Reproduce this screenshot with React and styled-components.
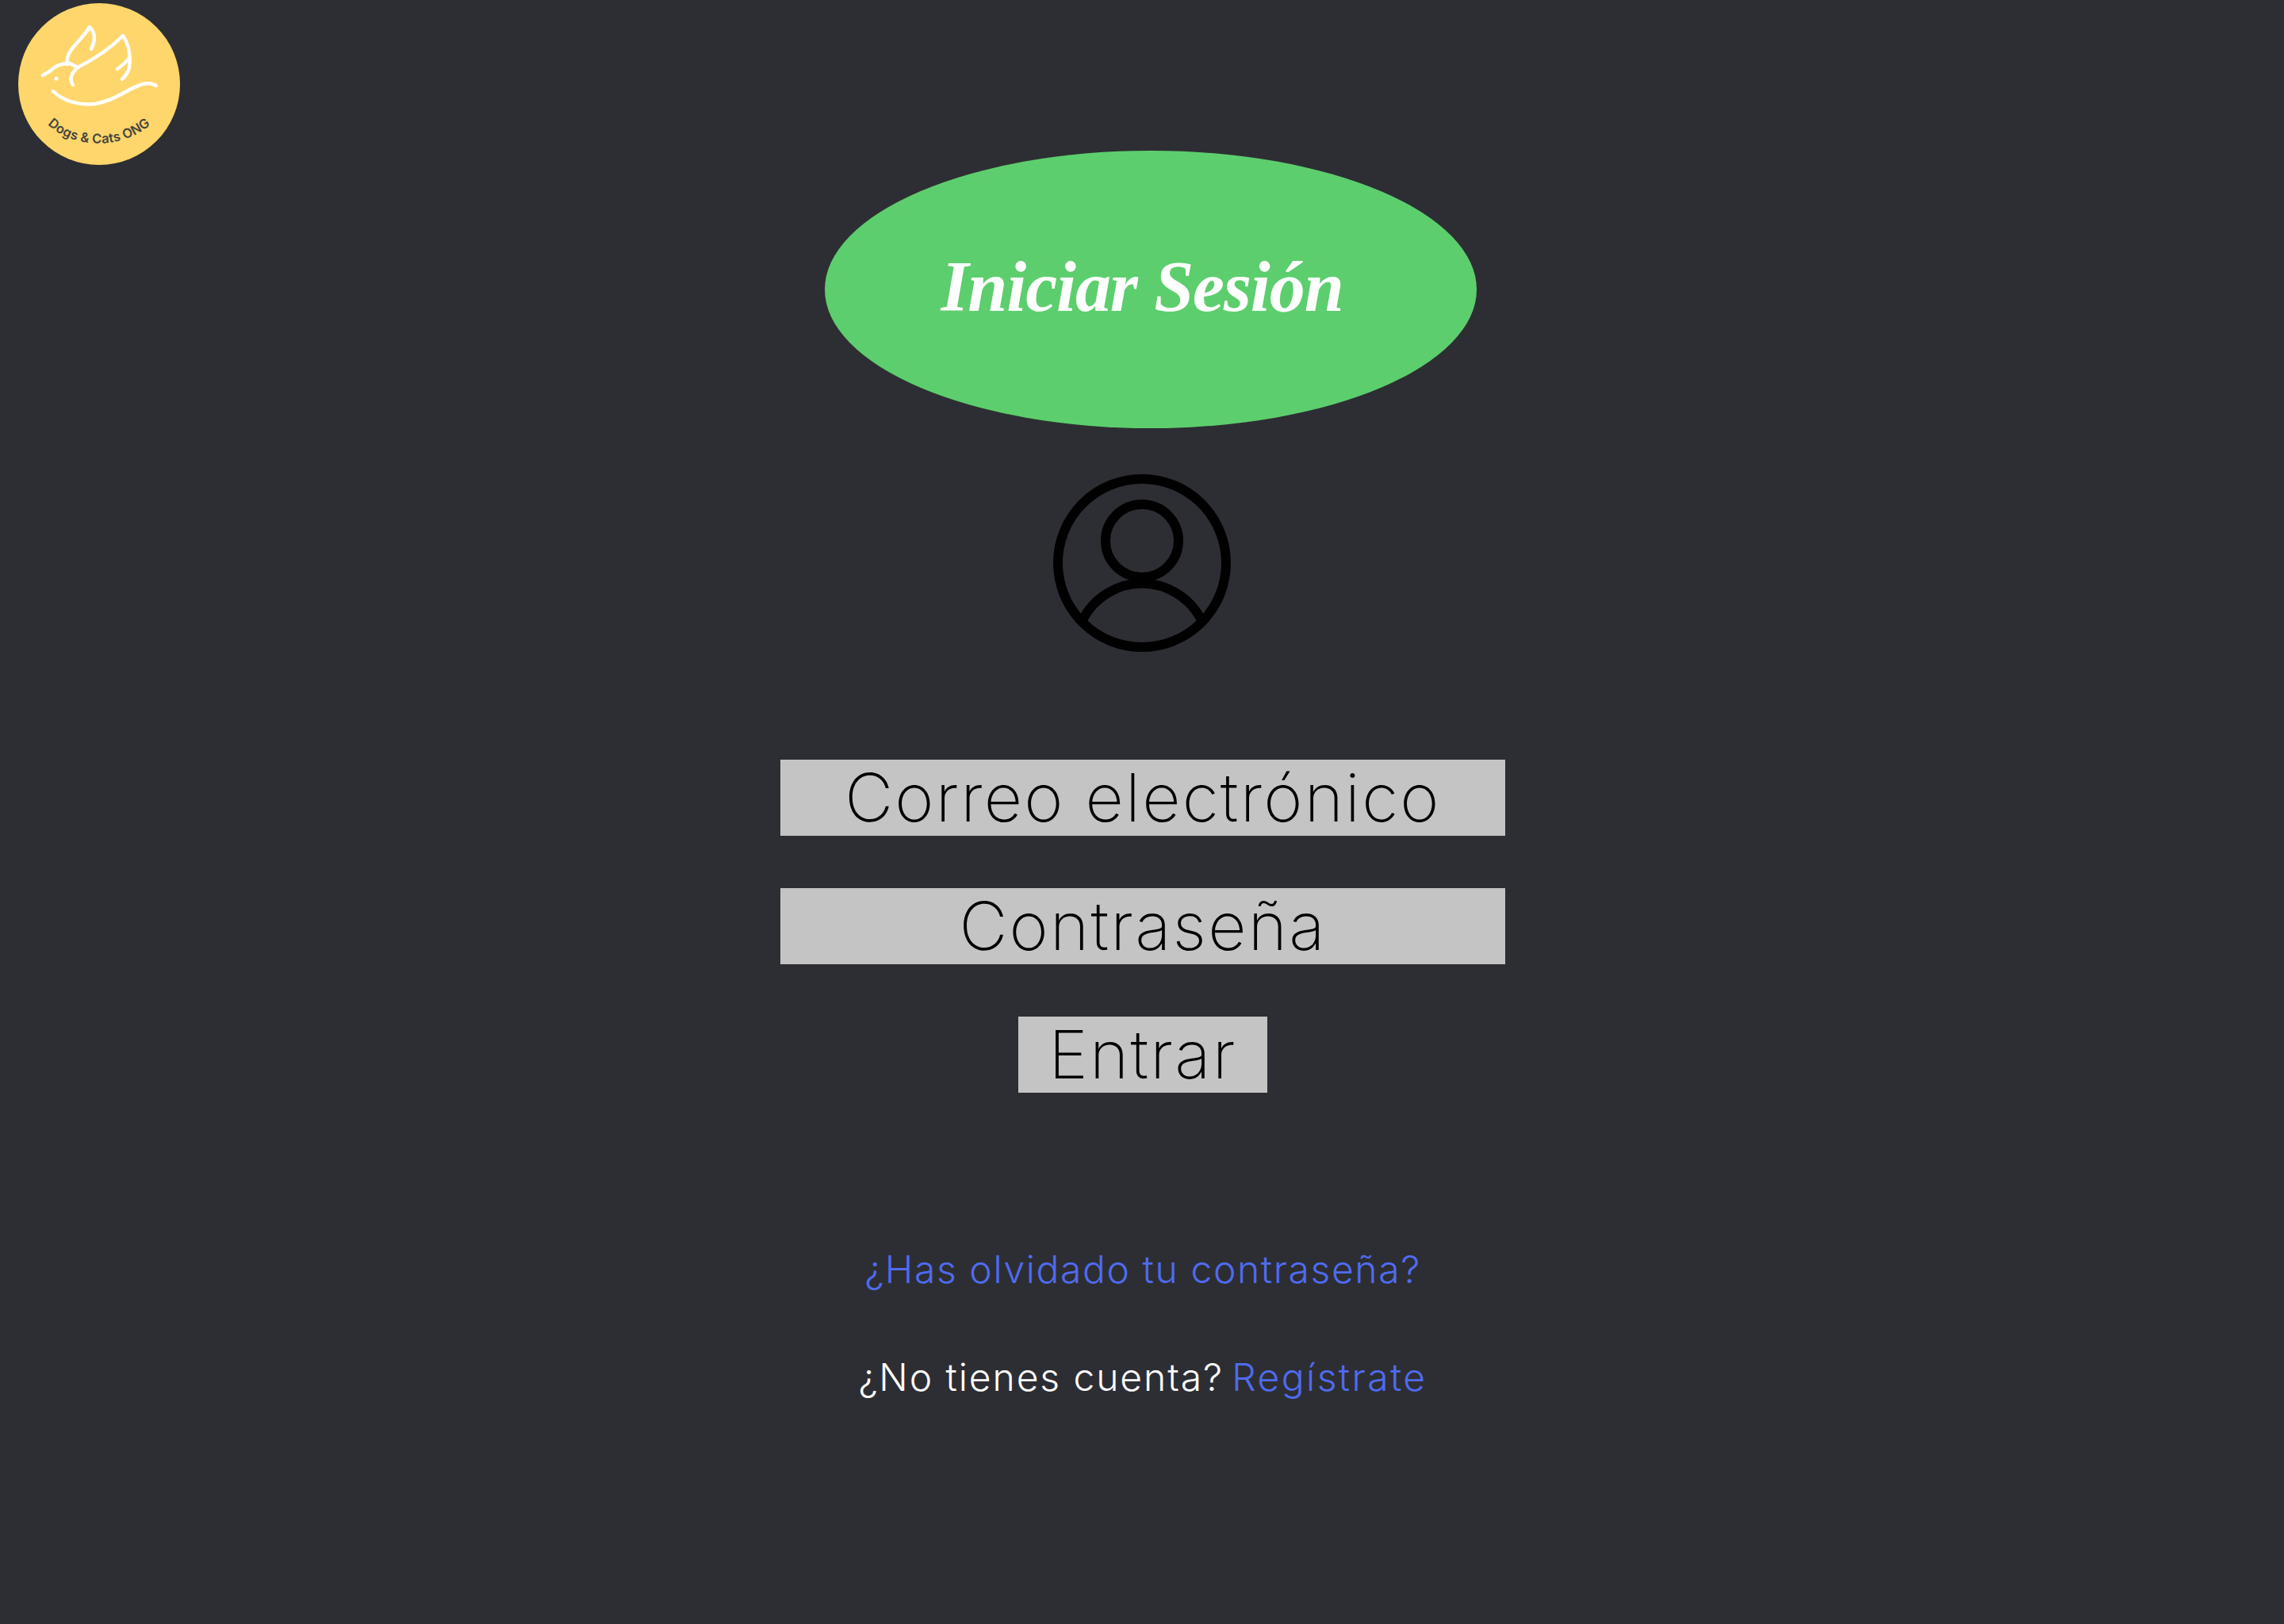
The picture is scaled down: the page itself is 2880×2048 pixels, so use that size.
import React from 'react'
import styled, { createGlobalStyle } from 'styled-components'

const GlobalStyle = createGlobalStyle`
  html, body {
    margin: 0;
    padding: 0;
    background: #2d2e33;
  }
`

const Page = styled.div`
  width: 2880px;
  height: 2048px;
  background: #2d2e33;
  font-family: 'Inter', 'Liberation Sans', sans-serif;
  overflow: hidden;
`

const Header = styled.header`
  height: 190px;
`

const Logo = styled.svg`
  display: block;
  width: 260px;
  height: 220px;
`

const Main = styled.main`
  display: flex;
  flex-direction: column;
  align-items: center;
  padding-left: 2px;
`

const TitleBadge = styled.div`
  width: 822px;
  height: 350px;
  margin-left: 20px;
  padding-right: 22px;
  padding-bottom: 6px;
  box-sizing: border-box;
  border-radius: 50%;
  background: #5dce6d;
  display: flex;
  align-items: center;
  justify-content: center;
`

const Title = styled.h1`
  margin: 0;
  font-family: 'Liberation Serif', serif;
  font-style: italic;
  font-weight: 700;
  font-size: 90px;
  letter-spacing: -1.1px;
  line-height: 1;
  color: #fff;
`

const UserIcon = styled.svg`
  display: block;
  width: 224px;
  height: 224px;
  margin-top: 58px;
  margin-right: 2px;
  margin-bottom: 136px;
`

const Form = styled.form`
  display: flex;
  flex-direction: column;
  align-items: center;
  gap: 66px;
`

const Field = styled.div`
  width: ${p => p.$width}px;
  height: 96px;
  background: #c4c4c4;
  color: #000;
  font-size: 84px;
  font-weight: 150;
  letter-spacing: 2.2px;
  line-height: 96px;
  text-align: center;
  white-space: nowrap;
`

const Links = styled.div`
  margin-top: 193px;
  display: flex;
  flex-direction: column;
  align-items: center;
  gap: 76px;
  font-size: 48px;
  font-weight: 300;
  letter-spacing: 1.6px;
  line-height: 60px;
  white-space: nowrap;
`

const Line = styled.div`
  color: #fff;
  letter-spacing: 1.9px;
`

const BlueLink = styled.a`
  color: #4f6bf0;
  text-decoration: none;
`

const RegisterLink = styled(BlueLink)`
  letter-spacing: 2.4px;
  margin-left: -5px;
`

function DoveLogo() {
  return (
    <Logo viewBox="0 0 260 220">
      <circle cx="125" cy="106" r="102" fill="#ffd66b" />
      <g fill="none" stroke="#fff" strokeWidth="4.5" strokeLinecap="round" strokeLinejoin="round">
        <path d="M115 62 C121 50 120 41 113 34 C106 46 94 56 89 64 C85 70 84 76 85 81" />
        <path d="M98 85 C120 74 140 60 155 45 C162 55 165 70 163 85 C162 90 158 96 154 100" />
        <path d="M148 87 C155 82 160 77 163 73" />
        <path d="M54 95 L64 89 C70 82 78 80 88 80 L98 85 C90 92 87 100 92 107" />
        <path d="M67 115 C80 128 100 133 120 131 C145 127 160 112 180 106 C190 104 192 106 197 108" />
      </g>
      <circle cx="71" cy="99" r="2.6" fill="#fff" />
      <defs>
        <path id="logo-curve" d="M56 153 C90 190 158 190 194 153" />
      </defs>
      <text fontFamily="'Inter', sans-serif" fontWeight="600" fontSize="16.5" letterSpacing="0.2" fill="#45433e">
        <textPath href="#logo-curve" startOffset="50%" textAnchor="middle">Dogs &amp; Cats ONG</textPath>
      </text>
    </Logo>
  )
}

function AvatarIcon() {
  return (
    <UserIcon viewBox="0 0 224 224" fill="none" stroke="#000" strokeWidth="12">
      <circle cx="112" cy="112" r="106" />
      <circle cx="112" cy="84" r="46" />
      <path d="M37 184 A84 84 0 0 1 187 184" />
    </UserIcon>
  )
}

export default function App() {
  return (
    <Page>
      <GlobalStyle />
      <Header>
        <DoveLogo />
      </Header>
      <Main>
        <TitleBadge>
          <Title>Iniciar Sesión</Title>
        </TitleBadge>
        <AvatarIcon />
        <Form>
          <Field $width={914}>Correo electrónico</Field>
          <Field $width={914}>Contraseña</Field>
          <Field $width={314}>Entrar</Field>
        </Form>
        <Links>
          <BlueLink href="#">¿Has olvidado tu contraseña?</BlueLink>
          <Line>
            ¿No tienes cuenta? <RegisterLink href="#">Regístrate</RegisterLink>
          </Line>
        </Links>
      </Main>
    </Page>
  )
}
